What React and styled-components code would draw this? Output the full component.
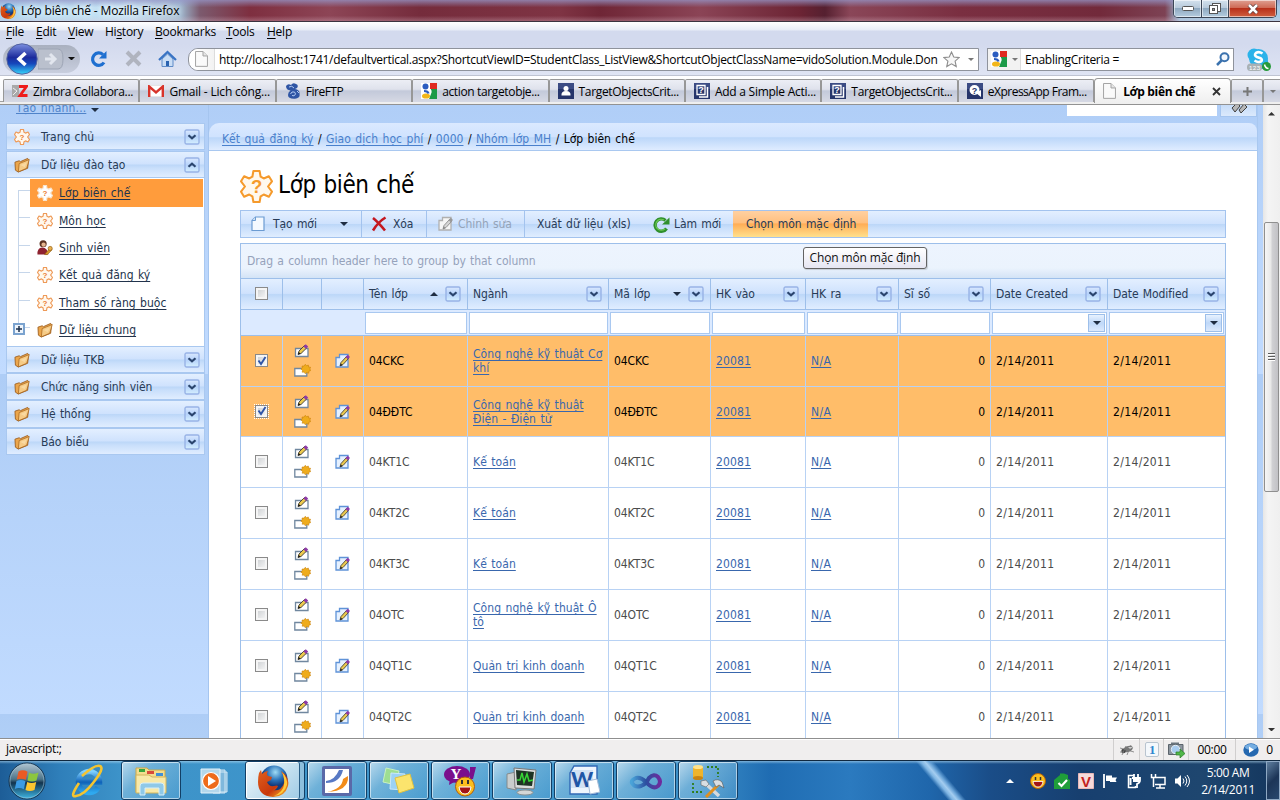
import React from "react";
import styled, { createGlobalStyle, css } from "styled-components";

const ui = `"Open Sans", "Noto Sans", sans-serif`;
const tahoma = `"DejaVu Sans Condensed", "DejaVu Sans", sans-serif`;
const glass = "linear-gradient(#e3efff 0%, #cfe2fd 48%, #bcd7f8 52%, #c9dffb 65%, #e0edff 100%)";

const Global = createGlobalStyle`
  *{box-sizing:border-box}
  html,body{margin:0;padding:0}
  body{width:1280px;height:800px;overflow:hidden;background:#fff;font:12px ${ui};color:#000}
  svg{display:block;flex:none}
`;

const Screen = styled.div`width:1280px;height:800px;display:flex;flex-direction:column;overflow:hidden;white-space:nowrap;`;

/* ---------- window chrome ---------- */
const TitleBar = styled.div`
  height:22px;flex:none;display:flex;align-items:center;border-bottom:1px solid #3b3440;padding-right:3px;
  background:
    linear-gradient(rgba(150,150,200,.75) 0,rgba(255,255,255,0) 35%,rgba(255,255,255,0) 75%,rgba(230,200,215,.3) 100%),
    linear-gradient(90deg,#a9d3ef 0,#b6dcf2 60px,#c4e2f4 130px,#9fb9d0 180px,#7c5a6e 200px,#7e2f40 250px,#8d4556 330px,#752c3c 420px,#7f3444 560px,#6f2636 600px,#8b4456 700px,#6c2434 800px,#552030 825px,#8a4658 850px,#7a2f41 960px,#722a3b 1100px,#7d4254 1165px,#9fc4df 1180px,#a7cbe4 100%);
`;
const TitleText = styled.div`margin-left:5px;flex:1;font-size:12px;letter-spacing:-.14px;text-shadow:0 0 6px #fff,0 0 8px #fff;`;
const WinButtons = styled.div`align-self:flex-start;display:flex;height:18px;border:1px solid #3c4656;border-top:0;border-radius:0 0 5px 5px;overflow:hidden;`;
const WinButton = styled.div`
  width:${p => p.$w}px;display:flex;align-items:center;justify-content:center;box-shadow:inset 0 0 0 1px rgba(255,255,255,.55);
  border-right:${p => (p.$close ? "0" : "1px solid #3c4656")};
  background:${p => (p.$close ? "linear-gradient(#dfa092 0,#cf6a55 45%,#b8301a 50%,#cf6040 100%)" : "linear-gradient(#d4e2ee 0,#b8cadb 45%,#8fa9c0 50%,#b5cde0 100%)")};
`;
const MenuBar = styled.div`height:22px;flex:none;display:flex;align-items:center;padding:0 0 3px 6px;background:linear-gradient(#fff 0,#e8edf7 8px,#d3daee 9px,#d3daee 100%);`;
const MenuItem = styled.div`width:${p => p.$w}px;font-size:12px;letter-spacing:-.25px;u{text-underline-offset:2px;text-decoration-thickness:1px}`;
const NavBar = styled.div`height:32px;flex:none;display:flex;align-items:center;padding-left:3px;background:linear-gradient(#d3daee,#dfe4f3);border-bottom:1px solid #bfc4d2;`;
const HistoryPill = styled.div`width:77px;height:28px;margin-top:-2px;border-radius:14px;background:linear-gradient(#a9b0bf,#c8cede);display:flex;align-items:center;`;
const NavIcon = styled.div`width:34px;display:flex;justify-content:center;padding-bottom:2px;`;
const UrlBox = styled.div`width:791px;height:23px;margin:0 0 1px 4px;display:flex;align-items:center;background:#fff;border:1px solid #8f939c;border-radius:10px 0 0 10px;padding-left:6px;overflow:hidden;`;
const UrlPage = styled.div`height:21px;width:20px;border-right:1px solid #dcdcdc;background:linear-gradient(90deg,#fff,#f2f2f2);display:flex;align-items:center;`;
const FieldText = styled.div`flex:1;margin-left:4px;font-size:12px;letter-spacing:${p => p.$ls || "-.2px"};overflow:hidden;`;
const SearchBox = styled.div`width:247px;height:23px;margin:0 0 1px 8px;display:flex;align-items:center;background:#fff;border:1px solid #8f939c;padding-right:3px;`;
const Engine = styled.div`width:33px;height:21px;background:#f2f2f2;display:flex;align-items:center;padding-left:3px;gap:5px;border-right:1px solid #ddd;`;
const TabStrip = styled.div`height:29px;flex:none;display:flex;align-items:flex-start;padding:3px 0 0 3px;background:linear-gradient(#fff 0,#f6f7fb 25px,#a0a0a0 25px,#a0a0a0 26px,#efefef 26px,#efefef 28px,#929292 28px);`;
const Tab = styled.div`
  width:${p => p.$w || 136.4}px;height:${p => (p.$active ? 25 : 23)}px;margin-top:${p => (p.$active ? -1 : 0)}px;
  display:flex;align-items:center;justify-content:${p => (p.$center ? "center" : "flex-start")};flex:none;
  padding-left:${p => (p.$center ? 0 : 8)}px;border:1px solid #979797;border-bottom:0;border-radius:${p => (p.$active ? "4px 4px 0 0" : "2px 2px 0 0")};
  background:${p => (p.$active ? "linear-gradient(#fff,#efefef)" : "linear-gradient(#eceef5 0,#dfe2ec 42%,#c3c9da 50%,#d6d9e4 100%)")};
  font-weight:${p => (p.$active ? 700 : 400)};
`;
const TabText = styled.span`margin-left:5px;flex:1;letter-spacing:${p => p.$ls || "-.1px"};`;

/* ---------- page ---------- */
const Page = styled.div`
  height:633px;flex:none;display:flex;overflow:hidden;font-family:${tahoma};letter-spacing:-.08px;word-spacing:1px;color:#283b56;
  background:linear-gradient(#b0cef7 0,#c1dbff 269px,#aecdf6 269px,#c1dbff 609px,#aecdf6 609px,#b0cff7 100%);
`;
const Sidebar = styled.div`width:209px;flex:none;border-right:1px solid #a5c5ef;padding-left:6px;`;
const QuickCreate = styled.div`height:18px;display:flex;align-items:flex-end;padding:0 0 8px 10px;gap:5px;
  a{line-height:14px;color:#4f83c9;text-decoration:underline;text-decoration-skip-ink:none;letter-spacing:.15px}
  svg{margin-bottom:3px}
`;
const GroupHead = styled.div`
  width:199px;height:${p => p.$h || 27}px;margin-top:${p => p.$mt || 0}px;display:flex;align-items:center;padding:0 4px 0 7px;gap:10px;
  background:${glass};border:1px solid #a9c8f0;
  span{flex:1;padding-left:1px}
`;
const Nest = styled.div`width:199px;height:168px;background:#fff;border:solid #a9c8f0;border-width:0 1px;display:flex;flex-direction:column;`;
const NestItem = styled.div`
  height:${p => p.$h || 27}px;margin-left:23px;width:173px;display:flex;align-items:center;padding-left:7px;gap:6px;
  background:${p => (p.$on ? "#ff9c3c" : "transparent")};color:#22334c;letter-spacing:.02px;
  span{text-decoration:underline;text-decoration-skip-ink:none;text-underline-offset:2px;line-height:16px}
`;
const NestBody = styled.div`padding-top:1px;background:
  linear-gradient(#c6d6ea,#c6d6ea) 11px 12px / 1px 139px no-repeat,
  repeating-linear-gradient(transparent 0 12px,#c6d6ea 12px 13px,transparent 13px 27.4px) 11px 0 / 12px 165px no-repeat;`;
const Branch = styled.div`display:flex;align-items:center;padding-left:6px;${NestItem}{margin-left:5px;width:auto}`;
const Plus = styled.div`width:12px;height:12px;margin-bottom:2px;border:2px solid #7ba3cf;background:#eef4fb;display:flex;align-items:center;justify-content:center;`;

const Main = styled.div`width:1048px;flex:none;display:flex;flex-direction:column;`;
const TopSearch = styled.div`height:18px;flex:none;display:flex;justify-content:flex-end;align-items:flex-start;gap:3px;`;
const TopInput = styled.div`width:150px;height:11px;background:#fff;`;
const TopButton = styled.div`width:37px;height:12px;border:1px solid #a5c5ef;border-top:0;background:linear-gradient(#c6dcf8,#dbe9fc);padding-left:10px;overflow:hidden;`;
const Crumbs = styled.div`
  height:28px;flex:none;border-radius:10px 8px 0 0;border-bottom:1px solid #a9c8f0;padding:4px 0 0 13px;line-height:24px;color:#000;letter-spacing:0;
  background:linear-gradient(#dbe9ff 0,#d0e3fe 50%,#bcd7f9 55%,#dfecff 100%);
  a{color:#4a80cc;text-decoration:underline;text-decoration-skip-ink:none;text-underline-offset:2px;letter-spacing:.04px}
`;
const Body = styled.div`flex:1;background:#fff;padding:17px 31px 0;`;
const Heading = styled.div`height:36px;display:flex;align-items:center;gap:5px;color:#000;font-size:24px;letter-spacing:-.35px;span{margin-top:-2px}`;
const Toolbar = styled.div`height:28px;margin-top:6px;display:flex;background:${glass};border:1px solid #a3c3ee;`;
const Tool = styled.div`
  width:${p => p.$w}px;display:flex;align-items:center;padding:0 0 0 ${p => p.$pl}px;gap:${p => p.$gap || 6}px;
  border-right:${p => (p.$sep ? "1px solid #a3c3ee" : "0")};
  color:${p => (p.$off ? "#94a3b8" : "#283b56")};
  background:${p => (p.$hot ? "linear-gradient(#ffd0a1 0,#ffc07f 45%,#ffad56 50%,#ffe08c 100%)" : "none")};
`;
const Grid = styled.div`margin-top:5px;border:1px solid #9dbfea;border-bottom:0;`;
const GroupPanel = styled.div`
  height:35px;border-bottom:1px solid #9dbfea;background:linear-gradient(#edf4fe 0,#ebf3fd 24px,#d3e3f6 34px);padding-left:6px;line-height:35px;color:#95a2bb;display:flex;letter-spacing:-.07px;
`;
const Tooltip = styled.div`
  position:absolute;left:803px;top:247px;width:124px;height:22px;border:1px solid #636363;border-radius:3px;background:linear-gradient(#fff,#e6e6f2);
  font:12px/20px ${ui};text-align:center;color:#111;letter-spacing:-.13px;box-shadow:1px 1px 1px rgba(0,0,0,.15);
`;
const cols = "42px 39px 42px 104px 141px 102px 95px 93px 92px 117px 117px";
const Row = styled.div`
  display:grid;grid-template-columns:${cols};height:${p => p.$h}px;width:984px;
  background:${p => (p.$bg || "#fff")};color:${p => (p.$sel ? "#000" : "#4b4b4b")};
`;
const Cell = styled.div`
  border:solid ${p => (p.$head ? "#9dbfea" : "#b8d2f4")};border-width:0 1px 1px 0;display:flex;align-items:center;
  &:last-child{border-right:0}
  justify-content:${p => (p.$j || "flex-start")};padding:${p => p.$p || "0 5px"};
  ${p => p.$date && css`letter-spacing:.35px;`}
  ${p => p.$col && css`flex-direction:column;gap:6px;padding-bottom:1px;`}
  ${p => p.$head && css`background:${glass};color:#283b56;gap:7px;span{flex:1}`}
`;
const FilterCell = styled.div`border-bottom:1px solid #9dbfea;padding:2px 1px 0;grid-column:${p => p.$span || "auto"};`;
const FilterInput = styled.div`height:22px;background:#fff;border:1px solid #a9c8f0;display:flex;justify-content:flex-end;padding:1px;`;
const DropBtn = styled.div`width:17px;height:18px;border:1px solid #9dbfea;background:linear-gradient(#e8f2ff,#bfd8f8 50%,#dbe9fd);display:flex;align-items:center;justify-content:center;`;
const Link = styled.span`color:#3967ad;text-decoration:underline;text-decoration-skip-ink:none;text-underline-offset:2px;line-height:14px;letter-spacing:${p => p.$ls || ".05px"};`;
const Check = styled.div`
  width:13px;height:13px;margin-bottom:1px;border:1px solid #8a8a8a;background:linear-gradient(135deg,#c9cccf,#fbfbfb);box-shadow:inset 0 0 0 2px #f5f5f5;display:flex;align-items:center;justify-content:center;
  outline:${p => (p.$focus ? "1px dotted #fff" : "0")};
`;
const Gutter = styled.div`width:6px;flex:none;border-left:1px solid #a9c8f0;`;
const ScrollBar = styled.div`width:17px;flex:none;background:linear-gradient(90deg,#e6e6e6,#f4f4f4 30%,#efefef);display:flex;flex-direction:column;align-items:center;padding:7px 0 7px 0;`;
const Thumb = styled.div`width:15px;height:270px;margin-top:106px;border:1px solid #8f8f8f;border-radius:2px;background:linear-gradient(90deg,#f6f6f6 0,#e8e8e8 45%,#d0d0d3 55%,#c1c1c5 100%);display:flex;flex-direction:column;align-items:center;justify-content:center;gap:1px;`;
const Grip = styled.i`width:7px;height:2px;background:#5b5b5b;border-bottom:1px solid #fff;`;
const Spacer = styled.div`flex:${p => (p.$w ? `0 0 ${p.$w}px` : "1")};`;

/* ---------- status bar and taskbar ---------- */
const Status = styled.div`height:22px;flex:none;display:flex;align-items:stretch;border-top:1px solid #8f8f8f;background:#f0eeee;box-shadow:inset 0 1px 0 #fff;padding-left:6px;line-height:20px;letter-spacing:-.35px;`;
const StatusCell = styled.div`width:${p => p.$w}px;border-left:1px solid #d0cece;display:flex;align-items:center;justify-content:center;gap:7px;`;
const Taskbar = styled.div`
  height:40px;flex:none;display:flex;border-top:1px solid #10283f;
  background:
    linear-gradient(rgba(190,225,245,.55) 0,rgba(255,255,255,0) 3px),
    linear-gradient(90deg,#1d5d97 0,#2f7fba 60px,#3d93c9 120px,#3f97cc 500px,#3c8fc8 700px,#1f6cb2 770px,#2b7abf 850px,#1f66ab 930px,#1a4d88 990px,#173f6f 1080px,#1e466f 1200px,#14365d 100%);
`;
const Orb = styled.div`width:56px;padding:1px 0 0 8px;`;
const Slot = styled.div`width:${p => p.$w || 62}px;display:flex;justify-content:center;align-items:center;`;
const TaskBtn = styled.div`
  width:60px;height:39px;margin-right:2px;display:flex;align-items:center;justify-content:center;border:1px solid #123f66;border-radius:3px;
  padding-right:${p => (p.$on ? 4 : 0)}px;
  box-shadow:${p => (p.$on ? "inset -4px 0 0 #8dbfdd,inset -5px 0 0 #2a5f88,inset 0 0 0 1px #fff" : "inset 0 0 0 1px rgba(255,255,255,.55)")};
  background:${p => (p.$on ? "linear-gradient(135deg,#f2f9fc,#c2dfef 55%,#9cc9e4)" : "linear-gradient(135deg,rgba(225,240,248,.75) 0,rgba(150,200,228,.55) 35%,rgba(90,165,212,.4) 100%)")};
`;
const Streak = styled.div`width:100px;height:39px;margin-left:152px;margin-right:13px;background:linear-gradient(50deg,transparent 42%,#7fb5e3 46%,#a4cdf0 49%,#6aa4d8 52%,transparent 56%);`;
const Tray = styled.div`display:flex;align-items:center;gap:8px;height:39px;margin-left:1px;`;
const Clock = styled.div`width:76px;text-align:center;color:#fff;line-height:17px;padding-top:3px;letter-spacing:-.35px;`;
const ShowDesk = styled.div`width:14px;height:39px;border:1px solid #8fa9c4;background:linear-gradient(135deg,#5f7f9f,#1c3557 50%,#28486e);`;

/* ---------- icons ---------- */
const Caret = ({ up, w = 8, c = "#1f2d42" }) => (
  <svg width={w} height={w / 2} viewBox="0 0 8 4"><path d={up ? "M0 4 4 0 8 4z" : "M0 0h8L4 4z"} fill={c} /></svg>
);
const Firefox = ({ s = 16 }) => (
  <svg width={s} height={s} viewBox="0 0 32 32">
    <defs>
      <radialGradient id="ffb" cx=".55" cy=".25"><stop offset="0" stopColor="#9fdcf5" /><stop offset=".6" stopColor="#2a72b8" /><stop offset="1" stopColor="#123a7c" /></radialGradient>
      <linearGradient id="ffo" x1="0" y1="0" x2="1" y2="1"><stop offset="0" stopColor="#e0601c" /><stop offset=".6" stopColor="#c8380c" /><stop offset="1" stopColor="#ffc52e" /></linearGradient>
    </defs>
    <circle cx="17" cy="14" r="13.5" fill="url(#ffb)" />
    <path d="M2 8 4 5l1 4q3-3 6-3-2 3 0 5l4 1-1 3-4 2q2 5 7 4 3-1 4 0-2 5-6 4 9 2 12-7 1-6-3-12 9 6 7 15-3 11-15 11Q1 31 1 17q0-5 1-9z" fill="url(#ffo)" />
    <path d="M25 7q6 6 5 13-3 10-13 11 9-4 10-11 1-6-2-13z" fill="#ffcb3a" />
  </svg>
);
const Back = () => (
  <svg width="32" height="32" viewBox="0 0 32 32">
    <defs><linearGradient id="bk" x2="0" y2="1"><stop offset="0" stopColor="#7c8fe0" /><stop offset=".45" stopColor="#1c2b9c" /><stop offset=".65" stopColor="#1546bb" /><stop offset="1" stopColor="#35d6fb" /></linearGradient></defs>
    <circle cx="16" cy="16" r="15.2" fill="url(#bk)" stroke="#5262a0" /><path d="m19.5 10-6.5 6 6.5 6" fill="none" stroke="#fff" strokeWidth="3.6" />
  </svg>
);
const Forward = () => (
  <svg width="26" height="24" viewBox="0 0 26 24"><path d="M0 2h20q5 0 5 10t-5 10H0z" fill="#bac0cd" stroke="#9da5b5" /><path d="m12 7 5 5-5 5M7 12h8" fill="none" stroke="#e2e6ee" strokeWidth="3" /></svg>
);
const Reload = () => (
  <svg width="18" height="18" viewBox="0 0 18 18"><path d="M14 12.5A6.2 6.2 0 1 1 13 4.6" fill="none" stroke="#1e6fd0" strokeWidth="3.2" /><path d="M16.5 1v7.5H9z" fill="#1e6fd0" /></svg>
);
const Stop = () => <svg width="17" height="17" viewBox="0 0 17 17"><path d="m2 2 13 13M15 2 2 15" stroke="#b0b4bf" strokeWidth="4" /></svg>;
const Home = () => (
  <svg width="19" height="18" viewBox="0 0 19 18"><path d="M4 9v7.5h11V9L9.5 4z" fill="#c9ddf5" stroke="#5f8bc7" /><path d="m1 10 8.5-8 8.5 8" fill="none" stroke="#3873c4" strokeWidth="2.2" /><path d="M8 11h3v5H8z" fill="#2a62b0" /></svg>
);
const Blank = ({ w = 13 }) => (
  <svg width={w} height={w * 1.22} viewBox="0 0 13 16"><path d="M.5.5H8L12.5 5v10.5H.5z" fill="#fafafa" stroke="#a3a3a3" /><path d="M8 .5V5h4.5" fill="#e6e6e6" stroke="#a3a3a3" /></svg>
);
const Star = () => <svg width="17" height="17" viewBox="0 0 24 24"><path d="m12 1.5 3.2 7 7.6.8-5.7 5.1 1.6 7.5-6.7-3.8-6.7 3.8 1.6-7.5L1.2 9.3l7.6-.8z" fill="#f7f7f7" stroke="#8f8f8f" strokeWidth="1.6" /></svg>;
const Google = () => (
  <svg width="16" height="16" viewBox="0 0 16 16"><path fill="#fff" d="M0 0h16v16H0z" /><path d="M9 0h7v6H9z" fill="#e02a20" /><path d="M10 6h6v10H8z" fill="#1c9a48" /><path d="M8 0q2 3 0 5 4 2 2 6l-2 5H6V0z" fill="#fff" /><circle cx="4.5" cy="3.500" r="3" fill="#2a5cc0" /><ellipse cx="5" cy="13" rx="4" ry="2.600" fill="#f2b619" /><path d="M3 8q4 0 4.500 2.500" stroke="#2a5cc0" strokeWidth="2.200" fill="none" /></svg>
);
const Magnifier = () => <svg width="14" height="14" viewBox="0 0 14 14"><circle cx="8.500" cy="5.300" r="4" fill="#f2f7fd" stroke="#3b72ae" strokeWidth="2" /><path d="M5.500 8.500 1 13" stroke="#3b72ae" strokeWidth="2.500" /></svg>;
const Skype = () => (
  <svg width="24" height="24" viewBox="0 0 24 24"><circle cx="7" cy="7" r="6.500" fill="#2bb3ea" /><circle cx="14" cy="14" r="7" fill="#1a9fdc" /><circle cx="11.500" cy="10.500" r="9.500" fill="#2bb3ea" /><path d="M15.500 5.500q-3.500-2.300-6.500-.7-2.500 2.500 1 4.200l3.500 1.200q2.500 1.600.500 3.300-3 1.500-6.500-1" fill="none" stroke="#fff" strokeWidth="2.600" /><rect y="15.500" width="15" height="7.500" rx="3.500" fill="#a9b1b4" /><text x="7.500" y="21.500" textAnchor="middle" fontSize="6.500" fontFamily="Lato" fill="#fff">123</text><circle cx="19.500" cy="18.500" r="4.500" fill="#27993a" /><path d="M17.500 16.500q1 4 4 4" stroke="#fff" strokeWidth="1.500" fill="none" /></svg>
);
const Zimbra = () => <svg width="16" height="14" viewBox="0 0 16 14"><path d="M0 1h7v12H0z" fill="#a9a9a9" /><path d="m1 4 4 3-4 4" stroke="#eee" fill="none" /><path d="M7 2.500h7.500L8 11.500h7.500" fill="none" stroke="#ee1c1c" strokeWidth="2.800" /></svg>;
const Gmail = () => <svg width="16" height="12" viewBox="0 0 16 12"><rect width="16" height="12" rx="1" fill="#fff" stroke="#ccc" /><path d="M1.200 12V1.500L8 7.500l6.800-6V12" fill="none" stroke="#d8342b" strokeWidth="2.400" /></svg>;
const FireFtp = () => <svg width="16" height="16" viewBox="0 0 16 16"><path d="M1 3q2-3 5-1 2-3 5-1 3 1 1 4l-2 1q5 1 4.500 5 1 4-4.500 4.700Q3 16 3 12q0-3 2.500-4.500Q1 7 1 3z" fill="#2f55a5" /><path d="M4 4q3-2 5 1M5.500 11q1-3 4-2 2 2 0 3.500-2 1-2.500-.500M12 8l2 2" stroke="#b4cbf3" fill="none" /></svg>;
const DocBadge = ({ kind }) => (
  <svg width="16" height="16" viewBox="0 0 16 16"><path d="M0 0h16v16H0z" fill="#26356b" /><path d="M0 0h16v6H0z" fill="#4b5c94" opacity=".6" />
    {kind === "user" && <><circle cx="8" cy="5.500" r="2.500" fill="#fff" /><path d="M3.500 12.500q-.5-4.500 4.500-4.500t4.500 4.500z" fill="#fff" /></>}
    {kind === "doc" && <><path d="M3 2.500h8v9H3z" fill="none" stroke="#fff" strokeWidth="1.300" /><path d="M13.500 4v10H5" stroke="#fff" strokeWidth="1.500" fill="none" /><text x="7" y="10.300" textAnchor="middle" fontSize="9" fontWeight="700" fontFamily="Liberation Sans" fill="#fff">?</text></>}
    {kind === "chat" && <><circle cx="7.500" cy="7" r="5" fill="#fff" /><path d="m9 10 5 4V7z" fill="#fff" /><text x="7.500" y="10.500" textAnchor="middle" fontSize="9" fontWeight="700" fontFamily="Liberation Sans" fill="#26356b">?</text></>}
  </svg>
);
const Gear = ({ s = 16, on }) => (
  <svg width={s} height={s} viewBox="0 0 32 32"><path d="M13 1h6l1 5.500 3 1.700L28 6l3 5-3.800 5 3.800 5-3 5-5-2.200-3 1.700-1 5.500h-6l-1-5.500-3-1.700L4 26l-3-5 3.800-5L1 11l3-5 5 2.200 3-1.700z" fill={on ? "#fff" : "#fff8ee"} stroke={on ? "#f7e3cd" : s > 20 ? "#f59a2c" : "#ee9a58"} strokeWidth={s > 20 ? 2 : 2.400} strokeLinejoin="round" /><text x="16" y="22.500" textAnchor="middle" fontSize={s > 20 ? 18 : 16} fontWeight="700" fontFamily="Liberation Sans" fill={s > 20 ? "#f59a2c" : "#ea7a33"}>?</text></svg>
);
const Folder = () => (
  <svg width="16" height="16" viewBox="0 0 17 16"><path d="M1 5 5.500 3.500l1.200 1L14.500 1l1 1.500-1 9L4.500 15.500 1.500 13.500z" fill="#eba64c" stroke="#9a5a1a" strokeWidth=".9" /><path d="m5.500 6.500 10.700-4.300L13.500 11.500 4.600 15.300z" fill="#f6cb86" stroke="#a8651d" strokeWidth=".8" /><path d="m7 8 6.500-2.700-2 5z" fill="#fbe2b4" opacity=".6" /></svg>
);
const Student = () => <svg width="16" height="17" viewBox="0 0 17 17"><circle cx="6.500" cy="4.500" r="3.800" fill="#5b3120" /><circle cx="7" cy="5.500" r="2.300" fill="#e5b58e" /><path d="M.5 16q-.5-7 5-7.500 6 .5 6.500 7.500z" fill="#8e2230" /><path d="m8 16 6-7 2 2-5 5z" fill="#d99a2a" stroke="#8f5d12" strokeWidth=".7" /><circle cx="14" cy="9.500" r="2.200" fill="#e8b050" stroke="#8f5d12" strokeWidth=".7" /></svg>;
const Chev = ({ up }) => (
  <svg width="16" height="16" viewBox="0 0 16 16"><defs><linearGradient id="chv" x2="0" y2="1"><stop offset="0" stopColor="#dbe9ff" /><stop offset=".5" stopColor="#b5d2fa" /><stop offset="1" stopColor="#d6f0ff" /></linearGradient></defs><rect x="1" y="1" width="14" height="14" rx="1.500" fill="url(#chv)" stroke="#98b3e6" strokeWidth="1.400" /><path d={up ? "M4.500 9.800 8 6.700l3.500 3.100" : "M4.500 6.300 8 9.400l3.500-3.100"} fill="none" stroke="#2b456e" strokeWidth="2.200" /></svg>
);
const NewDoc = () => <svg width="14" height="16" viewBox="0 0 14 16"><path d="M4.500 1h8.500v13.500H1V4.500z" fill="#f4f9ff" stroke="#6b9bd2" strokeWidth="1.200" /><path d="M1 4.500h3.500V1" fill="#cfe1f5" stroke="#6b9bd2" /></svg>;
const RedX = () => <svg width="16" height="16" viewBox="0 0 16 16"><path d="M2 2q5 4 12 12.500M14.500 1.500Q7 6 2 14.500" fill="none" stroke="#c4181f" strokeWidth="2.600" /></svg>;
const EditDoc = ({ gray }) => (
  <svg width="15" height="16" viewBox="0 0 15 16"><path d="M4.500 1.500H13v12.500H1V4.500h3.500z" fill={gray ? "#f6f6f6" : "#e6f1ff"} stroke={gray ? "#b0b0b0" : "#5f93d8"} strokeWidth="1.300" /><path d="M5 13 6 9.500 11.500 3.500l2 2L8 11.500z" fill={gray ? "#d6d6d6" : "#ecc94d"} stroke={gray ? "#8a8a8a" : "#4a4434"} strokeWidth=".9" /><path d="m10.500 4 2.300-2.300 2.200 2.200L12.700 6.300z" fill={gray ? "#999" : "#8e3aa8"} /><path d="M5 13l.8-2.500 1.700 1.800z" fill={gray ? "#888" : "#222"} /></svg>
);
const EditRow = () => <svg width="16" height="14" viewBox="0 0 16 14"><path d="M1.500 4.500h12.500v8H1.500z" fill="#fff" stroke="#70879f" strokeWidth="1.300" /><path d="M4 10.500 5 7 10.500 1.500l2.300 2.300L7 9.500z" fill="#ecc94d" stroke="#3f3a30" strokeWidth=".9" /><path d="M9.500 2.500 11.700.3l2.500 2.300L12 5z" fill="#8e3aa8" /><path d="m4 10.500.7-2.500 1.900 1.700z" fill="#111" /></svg>;
const NewRow = () => <svg width="17" height="13" viewBox="0 0 17 13"><path d="M.8 4.500h12v7.500H.8z" fill="#fff" stroke="#70879f" strokeWidth="1.300" /><path d="m11.300.3 1.200 1.500 1.800-.8.300 2 2 .3-.8 1.700 1 1.500-1.900.7-.2 2-1.900-.6-1.500 1.200-1.100-1.700-2 .1.400-1.900L6.800 5l1.600-1.200L8 2l2 .1z" fill="#efac1c" stroke="#c98109" strokeWidth=".6" /></svg>;
const Refresh = () => <svg width="18" height="17" viewBox="0 0 18 17"><path d="M14.500 12.500A6.200 6.200 0 1 1 13.500 4.500" fill="none" stroke="#2f8f2c" strokeWidth="3.400" /><path d="M13 12.800A5.500 5.500 0 1 1 12 4" fill="none" stroke="#6fca55" strokeWidth="1.200" /><path d="M17.500 1.500V8.500h-7.500z" fill="#2f8f2c" /></svg>;
const Tick = () => <svg width="10" height="10" viewBox="0 0 10 10"><path d="m1.500 4.500 2.500 3.500L8.500 1" fill="none" stroke="#2f55a8" strokeWidth="1.900" /></svg>;
const Cross = () => <svg width="8" height="8"><path d="M4 1v6M1 4h6" stroke="#1c2e49" strokeWidth="1.500" /></svg>;
const Binocular = () => <svg width="18" height="10" viewBox="0 0 18 10"><path d="m1 3 5-5 3 3-5 6zM8 5l5-6 3 3-6 6z" fill="#b7b7b7" stroke="#3f3f3f" /></svg>;
const Bug = () => <svg width="16" height="12" viewBox="0 0 16 12"><ellipse cx="9" cy="5" rx="5" ry="3" transform="rotate(-20 9 5)" fill="#777" /><circle cx="4.500" cy="7" r="2.200" fill="#444" /><path d="m1 4 14 4M3 11l4-9m1 9 4-10M1 8h4" stroke="#777" strokeWidth=".8" /><path d="m9 3 5 0-3 2z" fill="#ccc" /></svg>;
const OneBox = () => <svg width="14" height="15" viewBox="0 0 14 15"><rect x=".5" y=".5" width="13" height="14" rx="1.500" fill="#f4f8fc" stroke="#b9c4cf" /><text x="7" y="12" textAnchor="middle" fontSize="13" fontWeight="700" fontFamily="Liberation Serif" fill="#2f86cf">1</text></svg>;
const Camera = () => <svg width="17" height="16" viewBox="0 0 17 16"><path d="M.5 2.500h14.500v10H.5z" fill="#8b959e" stroke="#5b636b" /><path d="M3 .5h8v2H3z" fill="#6b747d" /><circle cx="7.500" cy="7.500" r="4.200" fill="#a9cdf0" stroke="#e5edf5" /><path d="M8 10h4V7l5 4.500-5 4.500v-3H8z" fill="#51b749" stroke="#2b7d26" strokeWidth=".7" /></svg>;
const Play = () => <svg width="16" height="14" viewBox="0 0 16 14"><ellipse cx="8" cy="7" rx="7.700" ry="6.700" fill="#2568b0" /><ellipse cx="8" cy="4" rx="6" ry="3" fill="#76aee2" /><path d="m6 3.500 5 3.300L6 10z" fill="#fff" /></svg>;

const StartOrb = () => (
  <svg width="38" height="38" viewBox="0 0 38 38"><defs><linearGradient id="orb" x2="0" y2="1"><stop offset="0" stopColor="#b4c6d2" /><stop offset=".45" stopColor="#4c7489" /><stop offset=".55" stopColor="#12334e" /><stop offset="1" stopColor="#3fb8e6" /></linearGradient></defs><circle cx="19" cy="19" r="18" fill="url(#orb)" stroke="#16344f" /><circle cx="19" cy="19" r="17" fill="none" stroke="#9ec4da" opacity=".6" /><path d="M10.500 9.500q4.500-2.500 9 .3l-1.700 8q-4.500-2-9-.3z" fill="#ea5a24" /><path d="M21 10.500q4 2.500 9.500 0l-2 8q-4.500 2-9 0z" fill="#8cc63e" /><path d="M8.500 19q4.500-2 9 .2l-1.700 8q-4.500-2-9-.3z" fill="#3b9be4" /><path d="M19.200 20q4.500 2 9 0l-1.700 8q-5 2-9 0z" fill="#fdc62f" /></svg>
);
const IE = () => (
  <svg width="34" height="34" viewBox="0 0 34 34">
    <defs><linearGradient id="ie" x2="0" y2="1"><stop offset="0" stopColor="#7fd0ff" /><stop offset=".5" stopColor="#0f62b8" /><stop offset="1" stopColor="#2fa9ef" /></linearGradient></defs>
    <path d="M27 23.500A10.500 10.500 0 1 1 28.500 18H10" fill="none" stroke="url(#ie)" strokeWidth="5.500" />
    <path d="M8 19Q-2 34 5 32q8-1 17-13Q34 4 29 2 24 0 11 12" fill="none" stroke="#f4c430" strokeWidth="2.600" />
  </svg>
);
const Explorer = () => <svg width="34" height="32" viewBox="0 0 34 32"><path d="M2 3h11l2 2h16v22H2z" fill="#f3dd8e" stroke="#c9a84c" /><path d="M5 4h6v3H5z" fill="#3aa53a" /><path d="M13 6h7v3h-7z" fill="#d84a3a" /><path d="M22 8h7v3h-7z" fill="#3f8fd6" /><path d="M2 10h13l3 2h14v16H2z" fill="#f8e9a8" stroke="#d2b45c" /><path d="M6 30v-9q0-3 3-3h18q3 0 3 3v9h-5v-7H11v7z" fill="#8fc9e8" stroke="#d6effa" /></svg>;
const Wmp = () => <svg width="30" height="28" viewBox="0 0 30 28"><path d="M14 3h12v23H14zM18 5h10v20H18z" fill="#7fb8dc" stroke="#d3e8f5" /><path d="M2 2h19v24H2z" fill="#b3d7ec" stroke="#e3f2fa" /><circle cx="12" cy="14" r="8.500" fill="#ee6b1c" stroke="#fff" strokeWidth="1.200" /><path d="m9 9 8 5-8 5z" fill="#fff" /></svg>;
const Foxit = () => <svg width="32" height="32" viewBox="0 0 32 32"><rect x="1" y="1" width="30" height="30" rx="2" fill="#5a69a8" /><path d="M4 4h24v24H4z" fill="#fff" /><path d="M5 16Q14 15 18 5h4Q19 18 5 18z" fill="#5879c4" /><path d="M6 27q15-3 16-13l5-3Q28 26 6 27z" fill="#f28c1a" /></svg>;
const Notes = () => <svg width="34" height="28" viewBox="0 0 34 28"><path d="m4 1 13 3-3 14L1 15z" fill="#9ede92" stroke="#c9f1c1" /><path d="m9 6 14 1-1 16-14-1z" fill="#9cd2f5" stroke="#cbe8fb" /><path d="m13 11 15-4 4 14-15 5z" fill="#fbe46d" stroke="#dfc242" /></svg>;
const Yahoo = () => <svg width="34" height="32" viewBox="0 0 34 32"><ellipse cx="13" cy="9.500" rx="13" ry="8.500" fill="#7a0f8c" /><path d="M6 13 5 20l7-4zM26 2h6l-3 12h-3z" fill="#7a0f8c" /><text x="12" y="14" textAnchor="middle" fontSize="15" fontWeight="700" fontFamily="Liberation Serif" fill="#fff">Y</text><circle cx="21" cy="21.500" r="9.500" fill="#fbbf1e" stroke="#b35b0d" /><path d="M15 22h12q-1 7-6 7t-6-7z" fill="#a31515" stroke="#fff" /><path d="M18 15v4m6-4v4" stroke="#333" strokeWidth="2" /></svg>;
const Monitor = () => <svg width="34" height="30" viewBox="0 0 34 30"><path d="m2 8 9-2v18l-9-2z" fill="#c9cdcd" stroke="#848b8c" /><path d="m9 2 22 2-2 19-19-1z" fill="#dadddd" stroke="#777" /><path d="m11 4 18 2-2 14-15-1z" fill="#1d3324" /><path d="m12 14 3 0 2-7 2 9 3-8 2 7 4-1" stroke="#36d436" strokeWidth="1.500" fill="none" /><ellipse cx="20" cy="26.500" rx="8" ry="2.500" fill="#d3d6d6" stroke="#8b9090" /></svg>;
const Word = () => <svg width="32" height="32" viewBox="0 0 32 32"><path d="M6 1h23v28H2V8z" fill="#eef5fd" stroke="#3168b5" strokeWidth="1.400" /><path d="M3 5h22v18H3z" fill="#3774c2" opacity=".15" /><text x="14" y="22" textAnchor="middle" fontSize="21" fontWeight="900" fontFamily="Lato" fill="#1f55a6">W</text><path d="m20 16 9-2 3 13-10 2z" fill="#fff" stroke="#a7bdd9" /></svg>;
const VStudio = () => <svg width="34" height="22" viewBox="0 0 34 22"><defs><linearGradient id="vs"><stop offset="0" stopColor="#4aa3d8" /><stop offset=".5" stopColor="#2b4fa0" /><stop offset="1" stopColor="#6d2b9d" /></linearGradient></defs><path d="M17 12q-5-5-10-4-5 2-4 5 3 5 9 3 5-2 8-8 5-5 9-1 4 5 0 9-5 4-12-4z" fill="none" stroke="url(#vs)" strokeWidth="4" /></svg>;
const DbTools = () => <svg width="34" height="34" viewBox="0 0 34 34"><path d="M2 3h10v11H2z" fill="#eeb42c" /><ellipse cx="7" cy="3" rx="5" ry="2" fill="#ffe28a" /><ellipse cx="7" cy="14" rx="5" ry="2" fill="#c98412" /><path d="M16 3h11v10M2 19v9h10" fill="none" stroke="#2f7d1a" strokeWidth="1.800" strokeDasharray="2 2" /><path d="m13 18 15 14" stroke="#d5d9dd" strokeWidth="3.500" /><path d="m28 20-13 13" stroke="#e0901f" strokeWidth="3" /><path d="M22 17q5-3 9 1l2 6-5-3-3 2z" fill="#d9dee2" stroke="#555" strokeWidth=".6" /><path d="m10 17 5-1 3 4-3 3-5-2z" fill="#d9dee2" stroke="#666" strokeWidth=".6" /></svg>;
const Smiley = () => <svg width="16" height="16" viewBox="0 0 16 16"><circle cx="8" cy="8" r="7.500" fill="#fbbf1e" stroke="#b3600d" /><path d="M3 8.500h10q-1 5.500-5 5.500T3 8.500z" fill="#a31515" stroke="#fff" strokeWidth=".8" /><path d="M5.500 4v3m5-3v3" stroke="#333" strokeWidth="1.500" /></svg>;
const GreenBox = () => <svg width="16" height="16" viewBox="0 0 16 16"><path d="m0 7 6-5V.5h4L14 2v4l2 1v9H0z" fill="#1f9e3a" /><path d="m4.500 10 3 3 5.500-6" stroke="#fff" strokeWidth="2.200" fill="none" /></svg>;
const VBox = () => <svg width="16" height="16" viewBox="0 0 16 16"><path d="M.5.5h15v15H.5z" fill="#f6dada" stroke="#e9b8b8" /><text x="8" y="13.500" textAnchor="middle" fontSize="15" fontWeight="700" fontFamily="Liberation Sans" fill="#c32020">V</text></svg>;
const Flag = () => <svg width="16" height="16" viewBox="0 0 16 16"><path d="M2 1v14" stroke="#fff" strokeWidth="1.800" /><path d="M4 2.500h6v2h5l-1.500 2.500 1 2H8V8H4z" fill="#fff" /></svg>;
const Plug = () => <svg width="16" height="16" viewBox="0 0 16 16"><path d="M8 2.500H2.500v12h7V13" fill="none" stroke="#fff" strokeWidth="1.500" /><path d="M4.500 5v7" stroke="#fff" strokeWidth="2" /><path d="M8 1v4m4-4v4m-6 0h8v2q0 3-3 4v4" stroke="#fff" strokeWidth="1.800" fill="none" /><path d="M7 5h6v4H7z" fill="#fff" /></svg>;
const Net = () => <svg width="16" height="16" viewBox="0 0 16 16"><path d="M6 4.500h9v7H5" fill="none" stroke="#fff" strokeWidth="1.500" /><path d="M10 12v2.500M6 15h9M1.500 1v3.500h4V1M3.500 4v10" stroke="#fff" strokeWidth="1.500" fill="none" /></svg>;
const Volume = () => <svg width="16" height="16" viewBox="0 0 16 16"><path d="M1 5.500h2.500L7 2v12l-3.500-3.500H1z" fill="#fff" /><path d="M9 5.500q2 2.500 0 5M11 3.500q3.500 4.500 0 9M13 2q5 6 0 12" stroke="#fff" fill="none" /></svg>;

/* ---------- data ---------- */
const tabs = [
  [<Zimbra />, "Zimbra Collabora...", "-.32px"],
  [<Gmail />, "Gmail - Lich công...", "-.2px"],
  [<FireFtp />, "FireFTP", "-.5px"],
  [<Google />, "action targetobje...", "-.36px"],
  [<DocBadge kind="user" />, "TargetObjectsCrit...", "-.34px"],
  [<DocBadge kind="doc" />, "Add a Simple Acti...", "-.26px"],
  [<DocBadge kind="doc" />, "TargetObjectsCrit...", "-.3px"],
  [<DocBadge kind="chat" />, "eXpressApp Fram...", "-.5px"],
];
const columns = [["Tên lớp", "up"], ["Ngành"], ["Mã lớp", "down"], ["HK vào"], ["HK ra"], ["Sĩ số"], ["Date Created"], ["Date Modified"]];
const rows = [
  ["04CKC", <>Công nghệ kỹ thuật Cơ<br />khí</>, true],
  ["04ĐĐTC", <>Công nghệ kỹ thuật<br />Điện - Điện tử</>, true],
  ["04KT1C", "Kế toán"],
  ["04KT2C", "Kế toán"],
  ["04KT3C", "Kế toán"],
  ["04OTC", <>Công nghệ kỹ thuật Ô<br />tô</>],
  ["04QT1C", "Quản trị kinh doanh"],
  ["04QT2C", "Quản trị kinh doanh"],
];

export default function App() {
  return (
    <Screen>
      <Global />
      <TitleBar>
        <Firefox />
        <TitleText>Lớp biên chế - Mozilla Firefox</TitleText>
        <WinButtons>
          <WinButton $w={28}><svg width="12" height="5"><rect x=".5" y=".5" width="11" height="4" rx="1" fill="#fff" stroke="#555" /></svg></WinButton>
          <WinButton $w={27}><svg width="12" height="12"><rect x="3.500" y=".5" width="8" height="8" fill="#fff" stroke="#555" /><rect x=".5" y="2.500" width="8" height="8" fill="#fff" stroke="#555" /><rect x="3.500" y="5.500" width="2" height="2" fill="#999" stroke="#555" /></svg></WinButton>
          <WinButton $w={47} $close><svg width="12" height="10" viewBox="0 0 12 10"><path d="m2 1 8 8M10 1 2 9" stroke="#5b3a3a" strokeWidth="4" /><path d="m2 1 8 8M10 1 2 9" stroke="#fff" strokeWidth="2.500" /></svg></WinButton>
        </WinButtons>
      </TitleBar>
      <MenuBar>
        <MenuItem $w={30}><u>F</u>ile</MenuItem>
        <MenuItem $w={32}><u>E</u>dit</MenuItem>
        <MenuItem $w={37}><u>V</u>iew</MenuItem>
        <MenuItem $w={50}>Hi<u>s</u>tory</MenuItem>
        <MenuItem $w={71}><u>B</u>ookmarks</MenuItem>
        <MenuItem $w={41}><u>T</u>ools</MenuItem>
        <MenuItem $w={40}><u>H</u>elp</MenuItem>
      </MenuBar>
      <NavBar>
        <HistoryPill><Spacer $w={3} /><Back /><Forward /><Spacer $w={4} /><Caret w={7} c="#111" /></HistoryPill>
        <Spacer $w={2} />
        <NavIcon><Reload /></NavIcon><NavIcon><Stop /></NavIcon><NavIcon><Home /></NavIcon>
        <UrlBox>
          <UrlPage><Blank /></UrlPage>
          <FieldText $ls="-.285px">http://localhost:1741/defaultvertical.aspx?ShortcutViewID=StudentClass_ListView&amp;ShortcutObjectClassName=vidoSolution.Module.Don</FieldText>
          <Star /><Spacer $w={8} /><Caret w={6} c="#777" /><Spacer $w={4} />
        </UrlBox>
        <SearchBox>
          <Engine><Google /><Caret w={6} c="#777" /></Engine>
          <FieldText $ls="-.28px">EnablingCriteria =</FieldText>
          <Magnifier />
        </SearchBox>
        <Spacer $w={13} />
        <Skype />
      </NavBar>
      <TabStrip>
        {tabs.map(([icon, label, ls], i) => <Tab key={i}>{icon}<TabText $ls={ls}>{label}</TabText></Tab>)}
        <Tab $active $w={137}><Blank /><Spacer $w={2} /><TabText $ls="-.35px">Lớp biên chế</TabText><svg width="9" height="9" viewBox="0 0 9 9"><path d="m1 1 7 7M8 1 1 8" stroke="#333" strokeWidth="1.800" /></svg><Spacer $w={9} /></Tab>
        <Tab $w={32} $center><svg width="9" height="9"><path d="M4.500 0v9M0 4.500h9" stroke="#777" strokeWidth="2" /></svg></Tab>
        <Tab $w={20} $center><Caret w={6} c="#777" /></Tab>
      </TabStrip>

      <Page>
        <Sidebar>
          <QuickCreate><a>Tạo nhanh...</a><Caret /></QuickCreate>
          <GroupHead><Gear /><span>Trang chủ</span><Chev /></GroupHead>
          <GroupHead $mt={1}><Folder /><span>Dữ liệu đào tạo</span><Chev up /></GroupHead>
          <Nest>
            <NestBody>
              <NestItem $on $h={28}><Gear on /><span>Lớp biên chế</span></NestItem>
              <NestItem><Gear /><span>Môn học</span></NestItem>
              <NestItem><Student /><span>Sinh viên</span></NestItem>
              <NestItem $h={28}><Gear /><span>Kết quả đăng ký</span></NestItem>
              <NestItem><Gear /><span>Tham số ràng buộc</span></NestItem>
              <Branch><Plus><Cross /></Plus><NestItem $h={28}><Folder /><span>Dữ liệu chung</span></NestItem></Branch>
            </NestBody>
          </Nest>
          <GroupHead $h={27}><Folder /><span>Dữ liệu TKB</span><Chev /></GroupHead>
          <GroupHead $h={27}><Folder /><span>Chức năng sinh viên</span><Chev /></GroupHead>
          <GroupHead $h={28}><Folder /><span>Hệ thống</span><Chev /></GroupHead>
          <GroupHead $h={27}><Folder /><span>Báo biểu</span><Chev /></GroupHead>
        </Sidebar>
        <Main>
          <TopSearch><TopInput /><TopButton><Binocular /></TopButton></TopSearch>
          <Crumbs><a>Kết quả đăng ký</a> / <a>Giao dịch học phí</a> / <a>0000</a> / <a>Nhóm lớp MH</a> / Lớp biên chế</Crumbs>
          <Body>
            <Heading><Gear s={33} /><span>Lớp biên chế</span></Heading>
            <Toolbar>
              <Tool $w={121} $pl={10} $gap={8} $sep><NewDoc />Tạo mới<Spacer /><Caret /><Spacer $w={5} /></Tool>
              <Tool $w={65} $pl={9} $sep><RedX />Xóa</Tool>
              <Tool $w={98} $pl={11} $gap={5} $sep $off><EditDoc gray />Chỉnh sửa</Tool>
              <Tool $w={127} $pl={12}>Xuất dữ liệu (xls)</Tool>
              <Tool $w={81} $pl={0} $gap={4}><Refresh />Làm mới</Tool>
              <Tool $w={135} $pl={13} $hot>Chọn môn mặc định</Tool>
            </Toolbar>
            <Grid>
              <GroupPanel>Drag a column header here to group by that column</GroupPanel>
              <Row $h={31}>
                <Cell $head $j="center"><Check /></Cell><Cell $head /><Cell $head />
                {columns.map(([name, sort]) => (
                  <Cell key={name} $head $p="0 6px 0 5px"><span>{name}</span>{sort && <Caret up={sort === "up"} />}<Chev /></Cell>
                ))}
              </Row>
              <Row $h={26} $bg="#dceaff">
                <FilterCell $span="1 / 4" />
                {columns.map(([name], i) => (
                  <FilterCell key={name}><FilterInput>{i > 5 && <DropBtn><Caret /></DropBtn>}</FilterInput></FilterCell>
                ))}
              </Row>
              {rows.map(([code, dept, sel], i) => (
                <Row key={code} $h={i === 1 ? 50 : 51} $sel={sel} $bg={sel ? "#ffbd69" : "#fff"}>
                  <Cell $j="center"><Check $focus={i === 1}>{sel && <Tick />}</Check></Cell>
                  <Cell $j="center" $col><EditRow /><NewRow /></Cell>
                  <Cell $j="center"><EditDoc /></Cell>
                  <Cell>{code}</Cell>
                  <Cell><Link>{dept}</Link></Cell>
                  <Cell>{code}</Cell>
                  <Cell><Link $ls=".15px">20081</Link></Cell>
                  <Cell><Link $ls=".4px">N/A</Link></Cell>
                  <Cell $j="flex-end">0</Cell>
                  <Cell $date>2/14/2011</Cell>
                  <Cell $date>2/14/2011</Cell>
                </Row>
              ))}
            </Grid>
          </Body>
        </Main>
        <Gutter />
        <ScrollBar>
          <Caret up w={7} c="#333" />
          <Thumb><Grip /><Grip /><Grip /></Thumb>
          <Spacer />
          <Caret w={7} c="#333" />
        </ScrollBar>
      </Page>

      <Status>
        javascript:;<Spacer />
        <StatusCell $w={26}><Bug /></StatusCell>
        <StatusCell $w={24}><OneBox /></StatusCell>
        <StatusCell $w={25}><Camera /></StatusCell>
        <StatusCell $w={47}>00:00</StatusCell>
        <StatusCell $w={45}><Play />0</StatusCell>
      </Status>
      <Taskbar>
        <Orb><StartOrb /></Orb>
        <Slot $w={65}><IE /></Slot>
        <TaskBtn><Explorer /></TaskBtn>
        <Slot $w={62}><Wmp /></Slot>
        <TaskBtn $on><Firefox s={32} /></TaskBtn>
        <TaskBtn><Foxit /></TaskBtn>
        <TaskBtn><Notes /></TaskBtn>
        <TaskBtn><Yahoo /></TaskBtn>
        <TaskBtn><Monitor /></TaskBtn>
        <TaskBtn><Word /></TaskBtn>
        <TaskBtn><VStudio /></TaskBtn>
        <TaskBtn><DbTools /></TaskBtn>
        <Streak />
        <Tray><Caret up c="#fff" /><Spacer /><Smiley /><GreenBox /><VBox /><Flag /><Plug /><Net /><Volume /></Tray>
        <Clock>5:00 AM<br />2/14/2011</Clock>
        <ShowDesk />
      </Taskbar>
      <Tooltip>Chọn môn mặc định</Tooltip>
    </Screen>
  );
}
